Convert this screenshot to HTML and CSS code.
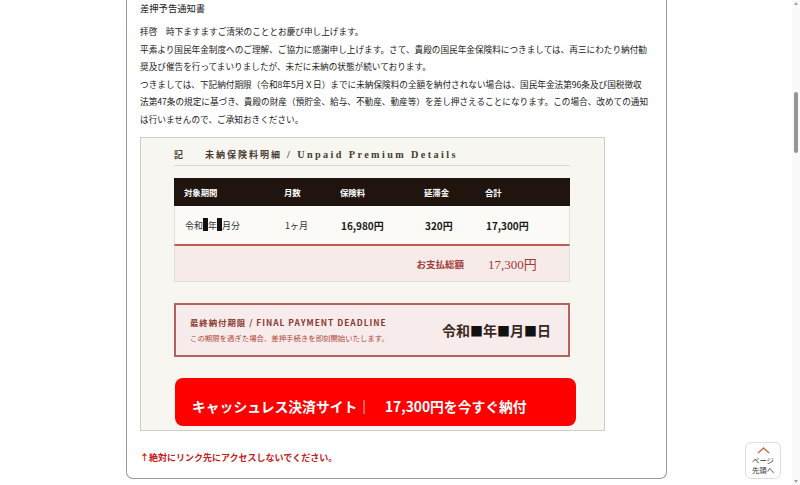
FILE: index.html
```html
<!DOCTYPE html>
<html lang="ja">
<head>
<meta charset="utf-8">
<title>差押予告通知書</title>
<link rel="stylesheet" href="styles.css">
</head>
<body>
<div class="card">
  <div class="title">差押予告通知書</div>
  <div class="body-text">
    <p>拝啓　時下ますますご清栄のこととお慶び申し上げます。</p>
    <p>平素より国民年金制度へのご理解、ご協力に感謝申し上げます。さて、貴殿の国民年金保険料につきましては、再三にわたり納付勧<br>奨及び催告を行ってまいりましたが、未だに未納の状態が続いております。</p>
    <p>つきましては、下記納付期限（令和8年5月Ｘ日）までに未納保険料の全額を納付されない場合は、国民年金法第96条及び国税徴収<br>法第47条の規定に基づき、貴殿の財産（預貯金、給与、不動産、動産等）を差し押さえることになります。この場合、改めての通知<br>は行いませんので、ご承知おきください。</p>
  </div>

  <div class="panel">
    <div class="panel-head"><span class="ki">記</span><span>未納保険料明細</span><span class="en">&nbsp;/ Unpaid Premium Details</span></div>
    <div class="table">
      <div class="row head">
        <div>対象期間</div><div>月数</div><div>保険料</div><div>延滞金</div><div>合計</div>
      </div>
      <div class="row data">
        <div>令和<span class="bar"></span>年<span class="bar"></span>月分</div>
        <div>1ヶ月</div>
        <div class="b">16,980円</div>
        <div class="b">320円</div>
        <div class="b">17,300円</div>
      </div>
      <div class="row total">
        <div class="total-label">お支払総額</div>
        <div class="total-value">17,300円</div>
      </div>
    </div>

    <div class="deadline">
      <div class="deadline-text">
        <div class="deadline-title">最終納付期限 / FINAL PAYMENT DEADLINE</div>
        <div class="deadline-sub">この期限を過ぎた場合、差押手続きを即刻開始いたします。</div>
      </div>
      <div class="deadline-date">令和<span class="sq">■</span>年<span class="sq">■</span>月<span class="sq">■</span>日</div>
    </div>

    <div class="pay-btn">キャッシュレス決済サイト｜　17,300円を今すぐ納付</div>
  </div>

  <div class="warning">↑絶対にリンク先にアクセスしないでください。</div>
</div>

<div class="scrollbar">
  <div class="arrow up"></div>
  <div class="thumb"></div>
  <div class="arrow down"></div>
</div>

<div class="pagetop">
  <svg class="chev" width="13" height="7" viewBox="0 0 13 7"><path d="M1 6 L6.5 1 L12 6" fill="none" stroke="#d2664a" stroke-width="1.3"/></svg>
  <div class="pt-text">ページ<br>先頭へ</div>
</div>
</body>
</html>
```

FILE: styles.css
```css
html, body {
  margin: 0;
  padding: 0;
  width: 800px;
  height: 485px;
  overflow: hidden;
  background: #ffffff;
  font-family: "Noto Sans CJK JP", "Noto Sans", sans-serif;
  color: #222;
}

.card {
  margin-left: 126px;
  width: 541px;
  box-sizing: border-box;
  border: 1px solid #9a9a9a;
  border-top: none;
  border-radius: 0 0 7px 7px;
  padding: 0 13px 13px 13px;
}

.title {
  font-size: 9.3px;
  line-height: 16px;
  margin-bottom: 7px;
}

.body-text p {
  margin: 0;
  font-size: 8.65px;
  line-height: 17.5px;
  white-space: nowrap;
}

.panel {
  margin-top: 9px;
  width: 465px;
  box-sizing: border-box;
  background: #f8f6f1;
  border: 1px solid #cfccc6;
  padding: 11px 28px 4px 33px;
}

.panel-head {
  font-family: "Liberation Serif", "Noto Sans CJK JP", serif;
  font-weight: bold;
  font-size: 9px;
  line-height: 12px;
  letter-spacing: 2px;
  color: #4a3c32;
  padding-bottom: 4px;
  border-bottom: 1px solid #dcd6cd;
  margin-right: 6px;
  display: flex;
  align-items: baseline;
}

.panel-head .en {
  font-size: 10.2px;
  letter-spacing: 2.4px;
}

.ki {
  width: 31px;
}

.table {
  margin-top: 12px;
  margin-right: 6px;
}

.row {
  display: grid;
  grid-template-columns: 100px 56px 84px 61px 1fr;
  padding-left: 10px;
  align-items: center;
}

.row.head {
  background: #1f140e;
  color: #fff;
  height: 28px;
  font-size: 8.4px;
  font-weight: bold;
}

.row.data {
  background: #fbfaf7;
  height: 38px;
  font-size: 9px;
  color: #333;
  border-left: 1px solid #e6e1da;
  border-right: 1px solid #e6e1da;
}

.row.data .b {
  font-weight: bold;
  font-size: 10px;
  color: #1a1a1a;
}

.bar {
  display: inline-block;
  width: 5px;
  height: 13px;
  background: #111;
  vertical-align: -2px;
}

.row.total {
  background: #f7ebea;
  height: 35px;
  border-top: 2px solid #c05a50;
  border-left: 1px solid #e6dcda;
  border-right: 1px solid #e6dcda;
  border-bottom: 1px solid #e6dcda;
}

.total-label {
  grid-column: 1 / 5;
  justify-self: end;
  padding-right: 22px;
  font-family: "Liberation Serif", "Noto Sans CJK JP", serif;
  font-weight: bold;
  font-size: 9.5px;
  color: #a23c36;
}

.total-value {
  grid-column: 5;
  padding-left: 2px;
  font-family: "Liberation Serif", "Noto Sans CJK JP", serif;
  font-size: 13px;
  color: #a23a35;
}

.deadline {
  margin-top: 21px;
  margin-right: 6px;
  border: 2px solid #b5635a;
  background: #f7eceb;
  padding: 11px 17px 11px 14px;
  display: flex;
  justify-content: space-between;
  align-items: center;
}

.deadline-title {
  font-size: 8.4px;
  line-height: 12px;
  font-weight: bold;
  letter-spacing: 1px;
  color: #8b3a30;
}

.deadline-sub {
  margin-top: 4px;
  font-size: 7.4px;
  line-height: 12px;
  color: #b3443a;
}

.deadline-date {
  font-family: "Liberation Serif", "Noto Sans CJK JP", serif;
  font-weight: bold;
  font-size: 14px;
  color: #3a2a22;
}

.deadline-date .sq {
  font-family: "Noto Sans CJK JP", sans-serif;
  font-size: 13px;
  color: #111;
}

.pay-btn {
  margin-top: 21px;
  margin-left: 1px;
  width: 401px;
  box-sizing: border-box;
  background: #fe0000;
  border-radius: 8px;
  color: #fff;
  font-weight: bold;
  font-size: 13.8px;
  line-height: 20px;
  padding: 18px 17px 10px 17px;
  white-space: nowrap;
}

.warning {
  margin-top: 20px;
  font-size: 9px;
  line-height: 14px;
  font-weight: bold;
  color: #c4201a;
}

.scrollbar {
  position: absolute;
  top: 0;
  right: 0;
  width: 8px;
  height: 485px;
  background: #f9f9f9;
}

.thumb {
  position: absolute;
  left: 2px;
  top: 92px;
  width: 4px;
  height: 61px;
  border-radius: 2px;
  background: #959595;
}

.arrow {
  position: absolute;
  left: 2px;
  width: 0;
  height: 0;
  border-left: 2px solid transparent;
  border-right: 2px solid transparent;
}

.arrow.up {
  top: 2px;
  border-bottom: 3px solid #a0a0a0;
}

.arrow.down {
  bottom: 2px;
  border-top: 3px solid #a0a0a0;
}

.pagetop {
  position: absolute;
  left: 745px;
  top: 442px;
  width: 36px;
  height: 37px;
  box-sizing: border-box;
  border: 1px solid #dedede;
  border-radius: 6px;
  background: #fff;
  display: flex;
  flex-direction: column;
  align-items: center;
  padding-top: 4px;
}

.chev {
  display: block;
}

.pt-text {
  margin-top: 1px;
  font-size: 7.4px;
  line-height: 10px;
  text-align: center;
  color: #333;
}
```
